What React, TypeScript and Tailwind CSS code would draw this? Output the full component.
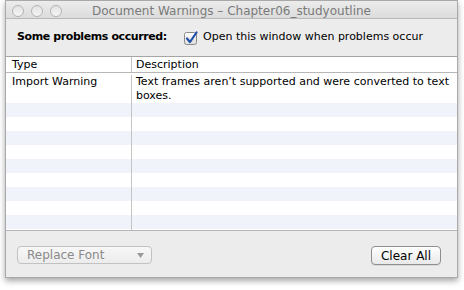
import React from 'react';

const font = { fontFamily: '"DejaVu Sans", "Lucida Grande", Verdana, sans-serif' };

function TrafficLight() {
  return <div className="w-[12px] h-[12px] rounded-full border border-[#b4b4b4] bg-gradient-to-b from-[#e4e4e4] to-[#f4f4f4]" />;
}

function CheckBox() {
  return (
    <svg width="14" height="14" viewBox="0 0 14 14">
      <defs>
        <linearGradient id="cb" x1="0" y1="0" x2="0" y2="1">
          <stop offset="0" stopColor="#ffffff" />
          <stop offset="1" stopColor="#dcdcdc" />
        </linearGradient>
      </defs>
      <rect x="0.5" y="1.5" width="12" height="12" rx="2" fill="url(#cb)" stroke="#8a8a8a" />
      <path d="M3 7.5 L6 11 L12.5 1.5" fill="none" stroke="#1f4fa8" strokeWidth="2.2" strokeLinecap="round" strokeLinejoin="round" />
    </svg>
  );
}

export default function App() {
  const stripes = Array.from({ length: 9 }, (_, i) => i);

  return (
    <div className="w-[464px] h-[290px] bg-white" style={font}>
      <div className="ml-[5px] w-[453px] h-[278px] flex flex-col border border-[#a9a9a9] bg-[#ececec] shadow-[0_3px_6px_rgba(0,0,0,0.35)]">
        {/* title bar */}
        <div className="relative h-[18px] flex items-center border-b border-[#b9b9b9] bg-gradient-to-b from-[#ececec] to-[#dcdcdc]">
          <div className="absolute left-[6px] top-[4px] flex gap-[7px]">
            <TrafficLight />
            <TrafficLight />
            <TrafficLight />
          </div>
          <div className="w-full text-center text-[12px] leading-none pt-[3px] text-[#7a7a7a]">
            Document Warnings – Chapter06_studyoutline
          </div>
        </div>

        {/* problems header */}
        <div className="h-[37px] flex items-center pl-[11px] text-[11px] text-black whitespace-nowrap">
          <span className="w-[167px] font-bold tracking-[-0.4px]">Some problems occurred:</span>
          <span className="flex items-center gap-[5px]">
            <CheckBox />
            <span>Open this window when problems occur</span>
          </span>
        </div>

        {/* table */}
        <div className="flex-1 flex flex-col bg-white border-t border-[#a5a5a5] border-b border-b-[#b5b5b5] text-[11px] text-black">
          <div className="h-[16px] flex border-b border-[#b7b7b7] leading-[15px]">
            <div className="w-[126px] pl-[6px] border-r border-[#c4c4c4]">Type</div>
            <div className="pl-[4px]">Description</div>
          </div>
          <div className="flex-1 flex flex-col">
            <div className="flex h-[30px] pt-[2px] leading-[14px]">
              <div className="w-[126px] pl-[6px] border-r border-[#c4c4c4]">Import Warning</div>
              <div className="flex-1 pl-[4px] pr-[8px]">Text frames aren’t supported and were converted to text boxes.</div>
            </div>
            {stripes.map(i => (
              <div key={i} className={`flex h-[14px] ${i % 2 === 0 ? 'bg-[#f0f4fa]' : 'bg-white'}`}>
                <div className="w-[126px] border-r border-[#c4c4c4]" />
                <div className="flex-1" />
              </div>
            ))}
            <div className="flex flex-1">
              <div className="w-[126px] border-r border-[#c4c4c4]" />
            </div>
          </div>
        </div>

        {/* bottom bar */}
        <div className="h-[46px] flex items-start justify-between pt-[15px] pl-[11px] pr-[16px] text-[12px]">
          <div className="w-[135px] h-[18px] flex items-center justify-between pl-[9px] pr-[7px] rounded-[4px] border border-[#c2c2c2] bg-gradient-to-b from-[#f7f7f7] to-[#ececec] text-[#8a8a8a]">
            <span>Replace Font</span>
            <svg width="7" height="5" viewBox="0 0 7 5"><path d="M0 0 L7 0 L3.5 5 Z" fill="#9a9a9a" /></svg>
          </div>
          <div className="w-[70px] h-[19px] flex items-center justify-center rounded-[4px] border border-[#8e8e8e] bg-gradient-to-b from-[#ffffff] to-[#e9e9e9] shadow-[0_1px_0_rgba(0,0,0,0.08)] text-black">
            Clear All
          </div>
        </div>
      </div>
    </div>
  );
}
